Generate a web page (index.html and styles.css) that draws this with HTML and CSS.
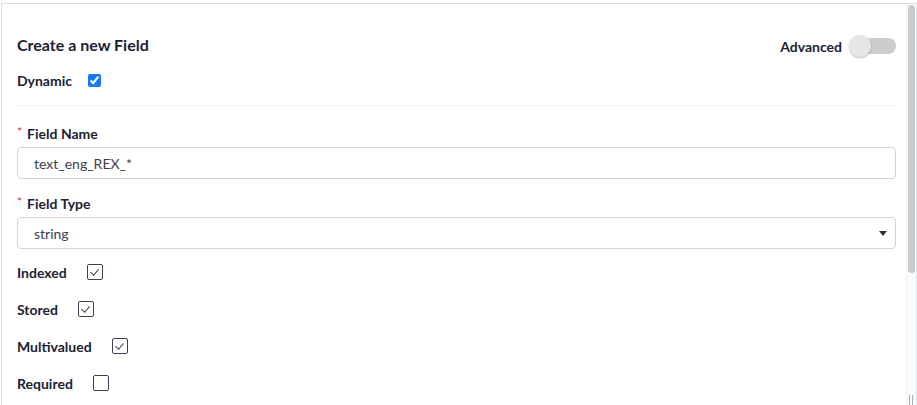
FILE: index.html
```html
<!DOCTYPE html>
<html lang="en">
<head>
  <meta charset="UTF-8">
  <title>Create a new Field</title>
  <link rel="stylesheet" href="styles.css">
</head>
<body>

  <div class="frame">
    <div class="panel">

      <div class="panel-header">
        <h3 class="panel-title">Create a new Field</h3>
        <label class="advanced">Advanced
          <span class="switch"><span class="knob"></span></span>
        </label>
      </div>

      <label class="check-row dynamic">Dynamic
        <input type="checkbox" checked>
      </label>

      <hr class="divider">

      <label class="field-label required">Field Name</label>
      <input class="text-input" type="text" value="text_eng_REX_*">

      <label class="field-label required">Field Type</label>
      <div class="select">
        <span>string</span>
        <span class="caret"></span>
      </div>

      <label class="check-row">Indexed <input class="box" type="checkbox" checked></label>
      <label class="check-row">Stored <input class="box" type="checkbox" checked></label>
      <label class="check-row">Multivalued <input class="box" type="checkbox" checked></label>
      <label class="check-row">Required <input class="box" type="checkbox"></label>
    </div>

    <!-- fake scrollbar, the panel keeps going below -->
    <div class="scrollbar">
      <div class="thumb"></div>
      <div class="grip"></div>
    </div>
  </div>

</body>
</html>
```

FILE: styles.css
```css
html, body {
  margin: 0;
  height: 100%;
  overflow: hidden;
  background: #fff;
}

body {
  font-family: Lato, "Noto Sans", sans-serif;
  color: #1b2235;
}

.frame {
  position: relative;
  margin: 3px 0 0 1px;
  height: 402px;
  border-top: 1px solid #d9dde3;
  border-left: 1px solid #d9dde3;
  border-right: 1px solid #e6e9ec;
  overflow: hidden;
  box-sizing: border-box;
}

.scrollbar {
  position: absolute;
  top: 0;
  right: 0;
  bottom: 0;
  width: 9px;
  background: #fbfbfb;
  border-left: 1px solid #f1f1f1;
}

.thumb {
  margin: 1px 0 0 1px;
  width: 7px;
  height: 268px;
  border-radius: 4px;
  background: #cbcbcb;
}

.grip {
  position: absolute;
  left: 2px;
  bottom: 0;
  width: 2px;
  height: 10px;
  border-left: 1px solid #a9acb3;
  border-right: 1px solid #a9acb3;
}

.panel {
  padding: 31px 20px 0 15px;
  display: flex;
  flex-direction: column;
}

.panel-header {
  height: 22px;
  display: flex;
  align-items: center;
  justify-content: space-between;
}

.panel-title {
  margin: 0;
  font-size: 16px;
  font-weight: 700;
  line-height: 20px;
  position: relative;
  top: -1px;
}

.advanced {
  display: flex;
  align-items: center;
  gap: 7px;
  font-size: 14px;
  font-weight: 700;
}

.switch {
  position: relative;
  width: 47px;
  height: 22px;
}

.switch::before {
  content: "";
  position: absolute;
  left: 6px;
  right: 0;
  top: 3px;
  height: 16px;
  border-radius: 8px;
  background: #cdcdcd;
}

.knob {
  position: absolute;
  left: 0;
  top: 0;
  width: 22px;
  height: 22px;
  border-radius: 50%;
  background: #e6e6e8;
  box-shadow: 0 1px 2px rgba(0, 0, 0, 0.25);
}

.check-row {
  display: flex;
  align-items: center;
  height: 20px;
  margin-top: 17px;
  font-size: 14px;
  font-weight: 700;
}

.dynamic {
  margin-top: 13px;
}

.dynamic input {
  margin: 0 0 0 16px;
  width: 13px;
  height: 13px;
  accent-color: #1677ff;
}

.divider {
  margin: 15px 0 0;
  border: none;
  border-top: 1px solid #eef0f2;
}

.field-label {
  display: flex;
  align-items: center;
  height: 20px;
  margin-top: 17px;
  font-size: 14px;
  font-weight: 700;
}

.field-label + .text-input,
.field-label + .select {
  margin-top: 4px;
}

.select + .check-row {
  margin-top: 13px;
}

.text-input + .field-label {
  margin-top: 14px;
}

.required::before {
  content: "*";
  color: #f5222d;
  font-weight: 400;
  font-size: 12px;
  margin-right: 5px;
  position: relative;
  top: -2px;
}

.text-input,
.select {
  box-sizing: border-box;
  width: 100%;
  height: 32px;
  border: 1px solid #d4d4d4;
  border-radius: 4px;
  padding: 0 16px;
  font-family: Lato, "Noto Sans", sans-serif;
  font-size: 14px;
  color: #3b404d;
  outline: none;
}

.select {
  display: flex;
  align-items: center;
  justify-content: space-between;
  padding-right: 8px;
}

.caret {
  width: 0;
  height: 0;
  border-left: 4px solid transparent;
  border-right: 4px solid transparent;
  border-top: 5px solid #2b3245;
}

.box {
  appearance: none;
  -webkit-appearance: none;
  margin: 0 0 0 20px;
  width: 16px;
  height: 16px;
  border: 1.5px solid #3c4254;
  border-radius: 2px;
  box-sizing: border-box;
  position: relative;
  background: #fff;
}

.box:checked::after {
  content: "";
  position: absolute;
  left: 4px;
  top: 1.5px;
  width: 3.5px;
  height: 7px;
  border-right: 1.5px solid #3c4254;
  border-bottom: 1.5px solid #3c4254;
  transform: rotate(40deg);
}
```
